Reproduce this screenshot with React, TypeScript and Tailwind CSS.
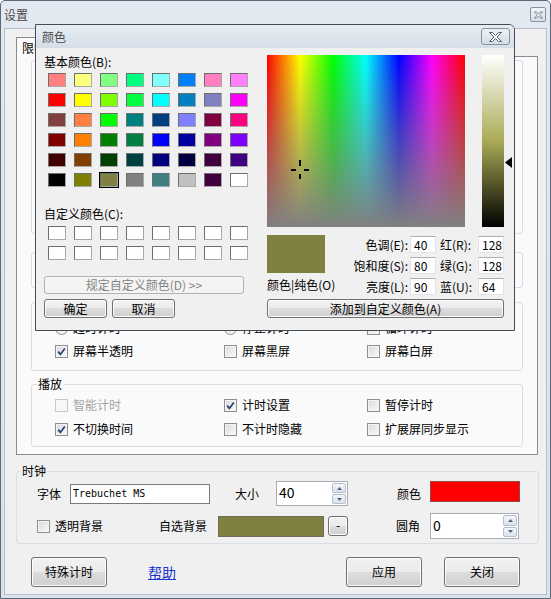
import React from 'react'

// Basic palette of the colour picker, 6 rows x 8 columns
const basicColors = [
  ['#ff8080', '#ffff80', '#80ff80', '#00ff80', '#80ffff', '#0080ff', '#ff80c0', '#ff80ff'],
  ['#ff0000', '#ffff00', '#80ff00', '#00ff40', '#00ffff', '#0080c0', '#8080c0', '#ff00ff'],
  ['#804040', '#ff8040', '#00ff00', '#008080', '#004080', '#8080ff', '#800040', '#ff0080'],
  ['#800000', '#ff8000', '#008000', '#008040', '#0000ff', '#0000a0', '#800080', '#8000ff'],
  ['#400000', '#804000', '#004000', '#004040', '#000080', '#000040', '#400040', '#400080'],
  ['#000000', '#808000', '#808040', '#808080', '#408080', '#c0c0c0', '#400040', '#ffffff'],
]

const btn =
  'flex items-center justify-center rounded-[3px] border border-[#707070] bg-[linear-gradient(to_bottom,#f2f2f2_0%,#ebebeb_50%,#dddddd_50%,#cfcfcf_100%)] shadow-[inset_0_0_0_1px_#fbfbfb]'

const textBox = 'border border-[#e2e3ea] border-t-[#abadb3] bg-white'

function CloseButton({ small = false }: { small?: boolean }) {
  return (
    <div
      className={
        small
          ? 'flex h-[15px] w-[16px] items-center justify-center rounded-[2px] border border-[#8391a1] bg-[linear-gradient(to_bottom,#f3f6f9,#d6dee7)]'
          : 'flex h-[17px] w-[29px] items-center justify-center rounded-[3px] border border-[#8391a1] bg-[linear-gradient(to_bottom,#eef2f6,#d3dce6)]'
      }
    >
      <svg width={small ? 9 : 13} height={small ? 8 : 10} viewBox="0 0 13 10">
        <path
          d="M0.5 0.5h3l3 3 3-3h3l-4.5 4.5 4.5 4.5h-3l-3-3-3 3h-3l4.5-4.5z"
          fill="#fff"
          stroke="#4e5c6b"
          strokeWidth="1"
          strokeLinejoin="round"
        />
      </svg>
    </div>
  )
}

function Check({ checked = false, disabled = false }: { checked?: boolean; disabled?: boolean }) {
  return (
    <span
      className={`flex h-[13px] w-[13px] shrink-0 items-center justify-center border ${
        disabled
          ? 'border-[#c9c9c9] bg-[#f7f7f7]'
          : 'border-[#8e8f8f] bg-[linear-gradient(135deg,#d9d9d9,#fbfbfb)] shadow-[inset_0_0_0_1px_#f4f4f4]'
      }`}
    >
      {checked && (
        <svg width="9" height="9" viewBox="0 0 9 9">
          <path d="M1.2 4.6 3.4 7.4 7.8 1.4" fill="none" stroke="#263f73" strokeWidth="1.7" />
        </svg>
      )}
    </span>
  )
}

function Radio({ checked = false }: { checked?: boolean }) {
  return (
    <span className="flex h-[13px] w-[13px] shrink-0 items-center justify-center rounded-full border border-[#8e8f8f] bg-[linear-gradient(135deg,#d9d9d9,#fbfbfb)]">
      {checked && <span className="h-[5px] w-[5px] rounded-full bg-[#24497c]" />}
    </span>
  )
}

function Option({
  label,
  radio = false,
  checked = false,
  disabled = false,
}: {
  label: string
  radio?: boolean
  checked?: boolean
  disabled?: boolean
}) {
  return (
    <div className="flex h-[20px] items-center gap-[5px]">
      {radio ? <Radio checked={checked} /> : <Check checked={checked} disabled={disabled} />}
      <span className={`whitespace-nowrap ${disabled ? 'text-[#a3a3a3]' : ''}`}>{label}</span>
    </div>
  )
}

function SpinArrow({ up = false }: { up?: boolean }) {
  return (
    <span className="flex flex-1 items-center justify-center rounded-[2px] border border-[#b3bfcd] bg-[linear-gradient(to_bottom,#f4f6f9,#dbe2ea)]">
      <svg width="5" height="3" viewBox="0 0 5 3">
        <path d={up ? 'M0 3 2.5 0 5 3z' : 'M0 0 2.5 3 5 0z'} fill="#4d6185" />
      </svg>
    </span>
  )
}

function Spin({ value, className }: { value: string; className: string }) {
  return (
    <div className={`flex items-stretch border border-[#abadb3] bg-white ${className}`}>
      <span className="flex flex-1 items-center pb-[3px] pl-[2px] text-[14px]">{value}</span>
      <div className="my-[1px] mr-[1px] flex w-[14px] flex-col gap-px">
        <SpinArrow up />
        <SpinArrow />
      </div>
    </div>
  )
}

function Swatch({ color, selected = false }: { color: string; selected?: boolean }) {
  return (
    <div
      className={`h-[14px] w-[18px] border border-[#a8a8a8] border-t-[#6d6d6d] border-l-[#6d6d6d] ${
        selected ? 'outline outline-black' : ''
      }`}
      style={{ backgroundColor: color }}
    />
  )
}

function ColorDialog() {
  return (
    <div className="absolute left-[35px] top-[24px] z-20 flex h-[307px] w-[480px] flex-col overflow-hidden rounded-tr-[6px] border border-[#434c58] bg-[#f0f0f0]">
      <div className="flex h-[23px] shrink-0 items-center justify-between bg-[linear-gradient(to_bottom,#e7edf3,#d5dee8)] pl-[6px] pr-[4px]">
        <span className="text-[#4b4b4b]">颜色</span>
        <CloseButton />
      </div>

      <div className="flex pl-[8px] pt-[7px]">
        {/* palette side */}
        <div className="w-[200px]">
          <div className="h-[14px]">基本颜色(B):</div>
          <div className="ml-[4px] mt-[4px] grid grid-cols-[repeat(8,18px)] gap-x-[8px] gap-y-[6px]">
            {basicColors.map((row, r) =>
              row.map((c, i) => <Swatch key={`${r}-${i}`} color={c} selected={r === 5 && i === 2} />)
            )}
          </div>
          <div className="mt-[20px] h-[14px]">自定义颜色(C):</div>
          <div className="ml-[4px] mt-[5px] grid grid-cols-[repeat(8,18px)] gap-x-[8px] gap-y-[6px]">
            {Array.from({ length: 16 }).map((_, i) => (
              <Swatch key={i} color="#ffffff" />
            ))}
          </div>
          <div className="mt-[16px] flex h-[18px] w-[200px] items-center justify-center rounded-[3px] border border-[#adb2b5] bg-[#f4f4f4] text-[#838383]">
            规定自定义颜色(D) &gt;&gt;
          </div>
          <div className="mt-[5px] flex gap-[5px]">
            <div className={`${btn} h-[19px] w-[63px]`}>确定</div>
            <div className={`${btn} h-[19px] w-[63px]`}>取消</div>
          </div>
        </div>

        {/* picker side */}
        <div className="ml-[23px]">
          <div className="flex">
            <div className="relative h-[172px] w-[198px] bg-[image:linear-gradient(to_bottom,rgba(128,128,128,0),rgb(128,128,128)),linear-gradient(to_right,#ff0000,#ffff00,#00ff00,#00ffff,#0000ff,#ff00ff,#ff0000)]">
              <svg className="absolute left-[23px] top-[105px]" width="20" height="20" viewBox="0 0 20 20">
                <rect x="1" y="9" width="5" height="2" fill="#000" />
                <rect x="14" y="9" width="5" height="2" fill="#000" />
                <rect x="9" y="0" width="2" height="6" fill="#000" />
                <rect x="9" y="14" width="2" height="5" fill="#000" />
              </svg>
            </div>
            <div className="ml-[17px] h-[172px] w-[22px] bg-[linear-gradient(to_bottom,#ffffff,#aaaa55,#000000)]" />
            <div className="ml-[1px] pt-[102px]">
              <svg width="7" height="11" viewBox="0 0 7 11">
                <path d="M0 5.5 7 0v11z" fill="#000" />
              </svg>
            </div>
          </div>

          <div className="mt-[8px] flex">
            <div className="w-[58px]">
              <div className="h-[38px] w-[58px] bg-[#808040]" />
              <div className="mt-[5px] whitespace-nowrap">颜色|纯色(O)</div>
            </div>
            <div className="grid grid-cols-[85px_26px_42px_26px] gap-y-[4px] pt-[1px]">
              <span className="flex h-[17px] items-center justify-end pr-[2px]">色调(E):</span>
              <span className={`${textBox} flex h-[17px] items-center pl-[3px]`}>40</span>
              <span className="flex h-[17px] items-center pl-[4px]">红(R):</span>
              <span className={`${textBox} flex h-[17px] items-center pl-[3px]`}>128</span>

              <span className="flex h-[17px] items-center justify-end pr-[2px]">饱和度(S):</span>
              <span className={`${textBox} flex h-[17px] items-center pl-[3px]`}>80</span>
              <span className="flex h-[17px] items-center pl-[4px]">绿(G):</span>
              <span className={`${textBox} flex h-[17px] items-center pl-[3px]`}>128</span>

              <span className="flex h-[17px] items-center justify-end pr-[2px]">亮度(L):</span>
              <span className={`${textBox} flex h-[17px] items-center pl-[3px]`}>90</span>
              <span className="flex h-[17px] items-center pl-[4px]">蓝(U):</span>
              <span className={`${textBox} flex h-[17px] items-center pl-[3px]`}>64</span>
            </div>
          </div>

          <div className={`${btn} mt-[4px] h-[19px] w-[237px]`}>添加到自定义颜色(A)</div>
        </div>
      </div>
    </div>
  )
}

export default function App() {
  return (
    <div className="relative h-[599px] w-[551px] overflow-hidden bg-white font-['Noto_Sans_CJK_SC','Noto_Sans',sans-serif] text-[12px] leading-[14px] text-black">
      {/* 设置 window */}
      <div className="flex h-full flex-col rounded-t-[5px] border border-[#5b6878] bg-[linear-gradient(to_bottom,#e3e9f0,#d9e1ea)] px-[3px] pb-[3px]">
        <div className="flex h-[27px] shrink-0 items-center justify-between pr-[1px]">
          <span className="text-[#4a4a4a]">设置</span>
          <CloseButton small />
        </div>

        <div className="flex flex-1 flex-col border border-[#b5c0cc] bg-[#f0f0f0] pl-[11px] pt-[8px]">
          {/* tab control */}
          <div className="w-[522px]">
            <div className="flex h-[20px]">
              <div className="relative z-10 flex h-[20px] items-center border border-b-0 border-[#898c95] bg-[#fafafa] px-[5px]">
                限时设置
              </div>
            </div>
            <div className="-mt-px h-[399px] border border-[#898c95] bg-[#fafafa] px-[14px] pt-[3px]">
              <div className="h-[174px] rounded-[3px] border border-[#d5dfe5]" />
              <div className="mt-[18px] h-[36px] rounded-[3px] border border-[#d5dfe5]" />
              <div className="mt-[14px] h-[69px] rounded-[3px] border border-[#d5dfe5] pl-[23px] pt-[15px]">
                <div className="grid grid-cols-[169px_143px_1fr] gap-y-[3px]">
                  <Option label="超时计时" radio checked />
                  <Option label="停止计时" radio />
                  <Option label="循环计时" />
                  <Option label="屏幕半透明" checked />
                  <Option label="屏幕黑屏" />
                  <Option label="屏幕白屏" />
                </div>
              </div>
              <fieldset className="mt-[6px] h-[70px] rounded-[3px] border border-[#d5dfe5] px-0">
                <legend className="ml-[5px] px-[1px] leading-[14px]">播放</legend>
                <div className="grid grid-cols-[169px_143px_1fr] gap-y-[4px] pl-[23px] pt-[4px]">
                  <Option label="智能计时" disabled />
                  <Option label="计时设置" checked />
                  <Option label="暂停计时" />
                  <Option label="不切换时间" checked />
                  <Option label="不计时隐藏" />
                  <Option label="扩展屏同步显示" />
                </div>
              </fieldset>
            </div>
          </div>

          {/* 时钟 */}
          <fieldset className="mt-[9px] h-[80px] w-[523px] rounded-[3px] border border-[#d5dfe5] px-0">
            <legend className="ml-[4px] px-[1px] leading-[14px]">时钟</legend>
            <div className="mt-[3px] flex h-[25px] items-center pl-[20px]">
              <span className="w-[24px]">字体</span>
              <div className="ml-[9px] flex h-[20px] w-[140px] items-center border border-[#7a7a7a] bg-white pl-[2px] font-['DejaVu_Sans_Mono',monospace] text-[10px]">
                Trebuchet MS
              </div>
              <span className="ml-[25px] w-[24px]">大小</span>
              <Spin value="40" className="ml-[17px] h-[25px] w-[72px]" />
              <span className="ml-[49px] w-[24px]">颜色</span>
              <div className="ml-[9px] h-[21px] w-[90px] self-start border border-[#8f4848] bg-[#ff0000]" />
            </div>
            <div className="mt-[7px] flex h-[26px] items-center pl-[20px]">
              <Check />
              <span className="ml-[5px] w-[48px]">透明背景</span>
              <span className="ml-[56px] w-[48px]">自选背景</span>
              <div className="ml-[11px] h-[21px] w-[106px] border border-[#6f6f55] bg-[#808040]" />
              <div className={`${btn} ml-[4px] h-[20px] w-[20px] pb-[2px]`}>-</div>
              <span className="ml-[48px] w-[24px]">圆角</span>
              <Spin value="0" className="ml-[10px] h-[26px] w-[89px]" />
            </div>
          </fieldset>

          {/* bottom buttons */}
          <div className="mt-[13px] flex h-[30px] items-center pl-[15px]">
            <div className={`${btn} h-[30px] w-[76px]`}>特殊计时</div>
            <span className="ml-[41px] text-[14px] leading-[16px] text-[#1a33cc] underline">帮助</span>
            <div className={`${btn} ml-[170px] h-[30px] w-[76px]`}>应用</div>
            <div className={`${btn} ml-[22px] h-[30px] w-[76px]`}>关闭</div>
          </div>
        </div>
      </div>

      <ColorDialog />
    </div>
  )
}
